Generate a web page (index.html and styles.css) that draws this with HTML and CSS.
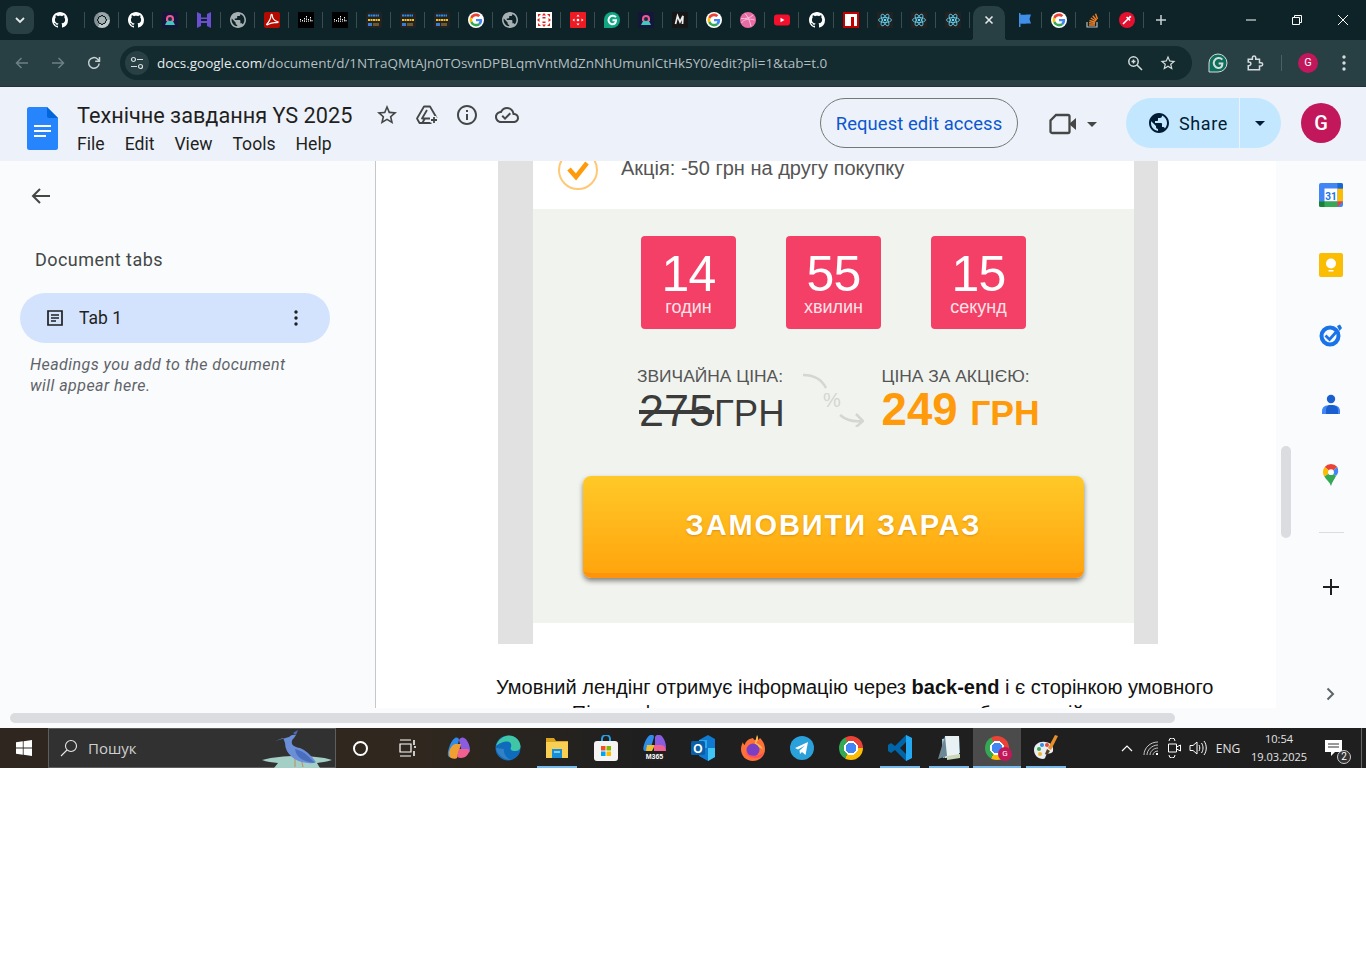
FILE: index.html
```html
<!DOCTYPE html>
<html lang="en">
<head>
    <meta charset="UTF-8">
    <meta name="viewport" content="width=device-width, initial-scale=1.0">
    <title>Технічне завдання YS 2025 - Google Docs</title>
    <link rel="stylesheet" href="styles.css">
</head>
<body>

<!-- shared icons -->
<svg class="sprite" aria-hidden="true">
    <symbol id="i-github" viewBox="0 0 16 16"><circle cx="8" cy="8" r="8" fill="#0d2328"/><path fill="#fff" d="M8 0C3.58 0 0 3.58 0 8c0 3.54 2.29 6.53 5.47 7.59.4.07.55-.17.55-.38 0-.19-.01-.82-.01-1.49-2.01.37-2.53-.49-2.69-.94-.09-.23-.48-.94-.82-1.13-.28-.15-.68-.52-.01-.53.63-.01 1.08.58 1.23.82.72 1.21 1.87.87 2.33.66.07-.52.28-.87.51-1.07-1.78-.2-3.64-.89-3.64-3.95 0-.87.31-1.59.82-2.15-.08-.2-.36-1.02.08-2.12 0 0 .67-.21 2.2.82.64-.18 1.32-.27 2-.27.68 0 1.36.09 2 .27 1.53-1.04 2.2-.82 2.2-.82.44 1.1.16 1.92.08 2.12.51.56.82 1.27.82 2.15 0 3.07-1.87 3.75-3.65 3.95.29.25.54.73.54 1.48 0 1.07-.01 1.93-.01 2.2 0 .21.15.46.55.38A8.013 8.013 0 0016 8c0-4.42-3.58-8-8-8z"/></symbol>
    <symbol id="i-google" viewBox="-6 -6 60 60"><circle cx="24" cy="24" r="30" fill="#fff"/><path fill="#EA4335" d="M24 9.5c3.54 0 6.71 1.22 9.21 3.6l6.85-6.85C35.9 2.38 30.47 0 24 0 14.62 0 6.51 5.38 2.56 13.22l7.98 6.19C12.43 13.72 17.74 9.5 24 9.5z"/><path fill="#4285F4" d="M46.98 24.55c0-1.57-.15-3.09-.38-4.55H24v9.02h12.94c-.58 2.96-2.26 5.48-4.78 7.18l7.73 6c4.51-4.18 7.09-10.36 7.09-17.65z"/><path fill="#FBBC05" d="M10.53 28.59c-.48-1.45-.76-2.99-.76-4.59s.27-3.14.76-4.59l-7.98-6.19C.92 16.46 0 20.12 0 24c0 3.88.92 7.54 2.56 10.78l7.97-6.19z"/><path fill="#34A853" d="M24 48c6.48 0 11.93-2.13 15.89-5.81l-7.73-6c-2.15 1.45-4.92 2.3-8.16 2.3-6.26 0-11.57-4.22-13.47-9.91l-7.98 6.19C6.51 42.62 14.62 48 24 48z"/></symbol>
    <symbol id="i-globe" viewBox="2 2 20 20"><path d="M12 2C6.48 2 2 6.48 2 12s4.48 10 10 10 10-4.48 10-10S17.52 2 12 2zM11 19.93c-3.95-.49-7-3.85-7-7.93 0-.62.08-1.21.21-1.79L9 15v1c0 1.1.9 2 2 2v1.93zm6.9-2.54c-.26-.81-1-1.39-1.9-1.39h-1v-3c0-.55-.45-1-1-1H8v-2h2c.55 0 1-.45 1-1V7h2c1.1 0 2-.9 2-2v-.41c2.93 1.19 5 4.06 5 7.41 0 2.08-.8 3.97-2.1 5.39z"/></symbol>
    <symbol id="i-face" viewBox="0 0 16 16"><rect width="16" height="16" fill="#14163a"/><path fill="#ef5a8f" d="M4 7a4 4 0 018 0v2H4z"/><circle cx="8" cy="7" r="2" fill="#1d2a4a"/><path fill="#3fc8c0" d="M3 13l2-4h6l2 4z"/></symbol>
    <symbol id="i-bars" viewBox="0 0 16 16"><rect width="16" height="16"/><path stroke="#fff" stroke-width="1" stroke-dasharray="1 .6" d="M2.5 7v3M4.5 8v2M6.500 6v4M8.500 4v6M10.500 7v3M12.500 5v5M14 8v2"/></symbol>
    <symbol id="i-code" viewBox="0 0 16 16"><rect width="16" height="16" rx="2" fill="#232323"/><path stroke="#2f8fe8" stroke-width="2" stroke-dasharray="2 .5" d="M2 3.500h11"/><path stroke="#f0c020" stroke-width="2" stroke-dasharray="2 .5" d="M2 8h12"/><rect x="2" y="11" width="4" height="3" fill="#3a7bd5"/><rect x="7" y="11" width="6" height="3" fill="#6b5a30"/></symbol>
    <symbol id="i-react" viewBox="0 0 16 16"><rect width="16" height="16" rx="1" fill="#222"/><g fill="none" stroke="#61dafb" stroke-width=".8"><ellipse cx="8" cy="8" rx="6.500" ry="2.500"/><ellipse cx="8" cy="8" rx="6.500" ry="2.500" transform="rotate(60 8 8)"/><ellipse cx="8" cy="8" rx="6.500" ry="2.500" transform="rotate(120 8 8)"/></g><circle cx="8" cy="8" r="1.300" fill="#61dafb"/></symbol>
    <symbol id="i-star" viewBox="0 0 24 24"><path d="M22 9.240l-7.190-.62L12 2 9.190 8.630 2 9.240l5.460 4.730L5.820 21 12 17.270 18.180 21l-1.630-7.030L22 9.240zM12 15.400l-3.760 2.270 1-4.280-3.320-2.880 4.380-.38L12 6.100l1.710 4.040 4.380.38-3.320 2.880 1 4.280L12 15.400z"/></symbol>
    <symbol id="i-gram" viewBox="0 0 16 16"><path fill="#11a683" d="M8 0a8 8 0 00-8 8v8h8A8 8 0 008 0z"/><path fill="none" stroke="#fff" stroke-width="2" d="M12 5.200A4.300 4.300 0 108 12.300c2.400 0 4-1.700 4-4H8.500"/></symbol>
</svg>

<header class="tabstrip">
    <button class="tab-search"><svg width="12" height="8" viewBox="0 0 12 8"><path d="M2 2l4 4 4-4" fill="none" stroke="#e3e8e9" stroke-width="1.800"/></svg></button>
    <div class="tab tab-first"><svg class="fav"><use href="#i-github"/></svg></div>
    <div class="tab"><span class="chrome-logo chrome-grey"></span></div>
    <div class="tab"><svg class="fav"><use href="#i-github"/></svg></div>
    <div class="tab"><svg class="fav"><use href="#i-face"/></svg></div>
    <div class="tab"><svg class="fav" viewBox="0 0 16 16"><path fill="#6a4fd0" d="M1 0l4 2v3.500h6V2l4-2v16l-4-2v-3H5v3l-4 2zM5 7v2h6V7z"/></svg></div>
    <div class="tab"><svg class="fav grey"><use href="#i-globe"/></svg></div>
    <div class="tab"><svg class="fav" viewBox="0 0 16 16"><rect width="16" height="16" rx="2" fill="#b30b00"/><path fill="none" stroke="#fff" stroke-width="1.200" d="M2.500 12.500C4.500 11 7 6 7 3.500c0-1.500 1.300-1.500 1.300 0 0 2.500 2 5.500 5 6 1.200.2 1 1.300-.3 1.200-3-.3-6.500.2-8.500 1.500-1 .7-2 1-2-.2"/></svg></div>
    <div class="tab"><svg class="fav"><use href="#i-bars"/></svg></div>
    <div class="tab"><svg class="fav"><use href="#i-bars"/></svg></div>
    <div class="tab"><svg class="fav"><use href="#i-code"/></svg></div>
    <div class="tab"><svg class="fav"><use href="#i-code"/></svg></div>
    <div class="tab"><svg class="fav"><use href="#i-code"/></svg></div>
    <div class="tab"><svg class="fav"><use href="#i-google"/></svg></div>
    <div class="tab"><svg class="fav grey"><use href="#i-globe"/></svg></div>
    <div class="tab"><svg class="fav" viewBox="0 0 16 16"><rect width="16" height="16" fill="#fff"/><path fill="#e0221c" d="M8 1l2 2.500H6zM8 15l-2-2.500h4zM1 8l2.500-2v4zM15 8l-2.500 2V6zM6.500 5h3v1.500h-3zM6.500 9.500h3V11h-3zM2 2h3L2 5zM14 2v3l-3-3zM2 14v-3l3 3zM14 14h-3l3-3z"/></svg></div>
    <div class="tab"><svg class="fav" viewBox="0 0 16 16"><rect width="16" height="16" rx="1" fill="#ed1c24"/><path fill="#fff" d="M8 2.500l1.500 2h-3zM8 13.500l-1.500-2h3zM2.500 8l2-1.500v3zM13.500 8l-2 1.500v-3z"/><circle cx="8" cy="8" r="1.300" fill="#fff"/></svg></div>
    <div class="tab"><svg class="fav"><use href="#i-gram"/></svg></div>
    <div class="tab"><svg class="fav"><use href="#i-face"/></svg></div>
    <div class="tab"><svg class="fav" viewBox="0 0 16 16"><rect width="16" height="16" rx="1" fill="#161616"/><path fill="none" stroke="#eee" stroke-width="1.700" d="M3.500 12l2-8 2.500 6 3-6-.5 8"/></svg></div>
    <div class="tab"><svg class="fav"><use href="#i-google"/></svg></div>
    <div class="tab"><svg class="fav" viewBox="0 0 16 16"><circle cx="8" cy="8" r="8" fill="#ea6ca4"/><path fill="none" stroke="#f9c3dc" stroke-width="1" d="M5 1.500c3 3 5 8 6 13M1 6.500c5 .5 9-.5 12-3.500M1.500 11c2-3.500 7-5 13-3"/></svg></div>
    <div class="tab"><svg class="fav" viewBox="0 0 16 16"><rect y="2.500" width="16" height="11" rx="3" fill="#f40f2c"/><path fill="#fff" d="M6.500 5.700v4.600L10.500 8z"/></svg></div>
    <div class="tab"><svg class="fav"><use href="#i-github"/></svg></div>
    <div class="tab"><svg class="fav" viewBox="0 0 16 16"><rect width="16" height="16" fill="#c10000"/><path fill="#fff" d="M2 2h12v12h-3V5H8v9H2z"/></svg></div>
    <div class="tab"><svg class="fav"><use href="#i-react"/></svg></div>
    <div class="tab"><svg class="fav"><use href="#i-react"/></svg></div>
    <div class="tab"><svg class="fav"><use href="#i-react"/></svg></div>
    <div class="tab tab-active"><span><svg width="10" height="10" viewBox="0 0 10 10"><path d="M1.500 1.500l7 7M8.500 1.500l-7 7" stroke="#e3e8e9" stroke-width="1.600"/></svg></span></div>
    <div class="tab"><svg class="fav" viewBox="0 0 16 16"><path fill="#3f8ee8" d="M2 1h1.500v1.500c3 1 5-.5 10.500 0l-1.500 4.500L14 11.500c-5.500-.5-7.500 1-10.500 0V15H2z"/></svg></div>
    <div class="tab"><svg class="fav"><use href="#i-google"/></svg></div>
    <div class="tab"><svg class="fav" viewBox="0 0 16 16"><path fill="none" stroke="#bcbbbb" stroke-width="1.200" d="M2 10v5h10v-5"/><path fill="none" stroke="#f48024" stroke-width="1.400" d="M4 13h6M4 10.800l6 .6M4.500 8.500l5.800 1.700M5.800 6l5 3M7.800 3.800l3.800 4.500M10.500 1.800l2 5.300"/></svg></div>
    <div class="tab"><svg class="fav" viewBox="0 0 16 16"><circle cx="8" cy="8" r="8" fill="#e3102f"/><path stroke="#fff" stroke-width="1.600" d="M4 12l5-5"/><path fill="#fff" d="M8 4.500l1.500 1 1.500-2 1.500 1.500-2 1.500 1 1.500-1 1L7 5.500z"/></svg></div>
    <div class="tab-new"><svg width="14" height="14" viewBox="0 0 14 14"><path d="M7 2v10M2 7h10" stroke="#c8d1d3" stroke-width="1.500"/></svg></div>
    <div class="win-controls">
        <span><svg width="10" height="10" viewBox="0 0 10 10"><path d="M0 5h10" stroke="#fff"/></svg></span>
        <span><svg width="10" height="10" viewBox="0 0 10 10"><path d="M.5 2.500h7v7h-7zM2.500 2.500V.5h7v7h-2" fill="none" stroke="#fff"/></svg></span>
        <span><svg width="10" height="10" viewBox="0 0 10 10"><path d="M0 0l10 10M10 0L0 10" stroke="#fff"/></svg></span>
    </div>
</header>

<nav class="toolbar">
    <button class="tool"><svg width="16" height="16" viewBox="0 0 16 16"><path d="M14 8H3M7.500 3L2.500 8l5 5" fill="none" stroke="#6d8084" stroke-width="1.500"/></svg></button>
    <button class="tool"><svg width="16" height="16" viewBox="0 0 16 16"><path d="M2 8h11M8.500 3l5 5-5 5" fill="none" stroke="#6d8084" stroke-width="1.500"/></svg></button>
    <button class="tool"><svg width="16" height="16" viewBox="0 0 16 16"><path d="M13.200 8.500A5.300 5.300 0 1111.500 4L13.500 6M13.500 2v4.300H9.200" fill="none" stroke="#c8d1d3" stroke-width="1.500"/></svg></button>
    <div class="omnibox">
        <span class="site-info"><svg width="14" height="14" viewBox="0 0 14 14"><g fill="none" stroke="#d5dcdd" stroke-width="1.200"><circle cx="3.500" cy="3.500" r="2"/><path d="M7 3.500h6M1 10.500h6"/><circle cx="10.500" cy="10.500" r="2"/></g></svg></span>
        <span class="url"><span class="url-host">docs.google.com</span>/document/d/1NTraQMtAJn0TOsvnDPBLqmVntMdZnNhUmunlCtHk5Y0/edit?pli=1&amp;tab=t.0</span>
        <svg class="omni-icon" width="16" height="16" viewBox="0 0 16 16"><g fill="none" stroke="#d5dcdd" stroke-width="1.500"><circle cx="6.500" cy="6.500" r="4.700"/><path d="M10 10l5 5M4.500 6.500h4M6.500 4.500v4"/></g></svg>
        <svg class="omni-icon star-icon" width="18" height="18"><use href="#i-star"/></svg>
    </div>
    <button class="tool tool-first"><svg width="20" height="20" viewBox="0 0 16 16"><path fill="#0c6f5b" stroke="#d5dcdd" stroke-width=".8" d="M8 .8A7.200 7.200 0 00.800 8v7.200H8A7.200 7.200 0 008 .8z"/><path fill="none" stroke="#d5dcdd" stroke-width="1.600" d="M11.500 5.300A4 4 0 108 12c2.200 0 3.500-1.500 3.500-3.700H8.500"/></svg></button>
    <button class="tool"><svg width="18" height="18" viewBox="0 0 24 24"><path fill="none" stroke="#d5dcdd" stroke-width="2" d="M3 7h5.500V4.500a2.300 2.300 0 014.500 0V7h5v4.500h2a2.200 2.200 0 010 4.500h-2v5H3v-5.500h1a2.500 2.500 0 000-5H3z"/></svg></button>
    <span class="tool-sep"></span>
    <button class="tool"><span class="mini-avatar">G</span></button>
    <button class="tool"><svg width="4" height="16" viewBox="0 0 4 16"><g fill="#d5dcdd"><circle cx="2" cy="2" r="1.700"/><circle cx="2" cy="8" r="1.700"/><circle cx="2" cy="14" r="1.700"/></g></svg></button>
</nav>

<section class="doc-header">
    <svg class="docs-logo" width="31" height="43" viewBox="0 0 31 43">
        <path fill="#2684fc" d="M2.500 0H20l11 11v29.500a2.500 2.500 0 01-2.500 2.500h-26A2.500 2.500 0 010 40.500v-38A2.500 2.500 0 012.500 0z"/>
        <path fill="#0066da" d="M20 0l11 11H22a2 2 0 01-2-2z"/>
        <path fill="#fff" d="M7 18h17v2H7zM7 23h17v2H7zM7 28h12v2H7z"/>
    </svg>
    <div class="doc-title-block">
        <div class="doc-title-row">
            <h1 class="doc-title">Технічне завдання YS 2025</h1>
            <div class="doc-actions">
                <svg width="24" height="24" viewBox="0 0 24 24"><use href="#i-star"/></svg>
                <svg width="24" height="24" viewBox="0 0 24 24"><path d="M9 3.500h6l7 12-2.500 4.500H4.500L2 15.500zM12 7l-5 8.500h8M7.500 19.500L10 15.500" fill="none" stroke="#444746" stroke-width="1.800" stroke-linejoin="round"/><path d="M19 13v8M15 17h8" stroke="#edf2fa" stroke-width="5"/><path d="M19 14v6M16 17h6" stroke="#444746" stroke-width="1.800"/></svg>
                <svg width="24" height="24" viewBox="0 0 24 24"><path d="M11 7h2v2h-2zm0 4h2v6h-2zm1-9C6.480 2 2 6.480 2 12s4.480 10 10 10 10-4.480 10-10S17.520 2 12 2zm0 18c-4.410 0-8-3.590-8-8s3.590-8 8-8 8 3.590 8 8-3.590 8-8 8z"/></svg>
                <svg width="24" height="24" viewBox="0 0 24 24"><path d="M19.350 10.040C18.670 6.590 15.640 4 12 4 9.110 4 6.600 5.640 5.350 8.040 2.340 8.360 0 10.910 0 14c0 3.310 2.690 6 6 6h13c2.760 0 5-2.240 5-5 0-2.640-2.050-4.780-4.650-4.960zM19 18H6c-2.210 0-4-1.790-4-4 0-2.050 1.530-3.760 3.560-3.970l1.070-.11.500-.95C8.080 7.140 9.940 6 12 6c2.620 0 4.880 1.860 5.390 4.430l.3 1.500 1.530.11c1.560.1 2.780 1.410 2.780 2.960 0 1.650-1.350 3-3 3zm-9-3.820l-2.090-2.090L6.500 13.500 10 17l6.010-6.010-1.410-1.410z"/></svg>
            </div>
        </div>
        <div class="doc-menu">
            <span>File</span><span>Edit</span><span>View</span><span>Tools</span><span>Help</span>
        </div>
    </div>
    <button class="request-btn">Request edit access</button>
    <div class="meet-btn">
        <svg width="28" height="22" viewBox="0 0 28 22"><path d="M7 2h12a1.500 1.500 0 011.500 1.500v15A1.500 1.500 0 0119 20H3a1.500 1.500 0 01-1.500-1.500V7.500z" fill="none" stroke="#444746" stroke-width="2.300"/><path d="M20 11l7-6v12z" fill="#444746"/></svg>
        <span class="caret"></span>
    </div>
    <div class="share-btn">
        <span class="share-main"><svg width="20" height="20"><use href="#i-globe"/></svg>Share</span>
        <span class="share-drop"><span class="caret caret-dark"></span></span>
    </div>
    <span class="avatar">G</span>
</section>

<main class="workspace">
    <aside class="sidebar">
        <svg class="back-arrow" width="24" height="24" viewBox="0 0 24 24"><path d="M21 12H4M11 5l-7 7 7 7" fill="none" stroke="#444746" stroke-width="2"/></svg>
        <h2 class="sidebar-title">Document tabs</h2>
        <div class="tab-pill">
            <svg width="20" height="20" viewBox="0 0 20 20"><path d="M3 3h14v14H3zM6 7h8M6 10h8M6 13h5" fill="none" stroke="#1f1f1f" stroke-width="1.700"/></svg>
            <span class="tab-pill-name">Tab 1</span>
            <svg width="4" height="16" viewBox="0 0 4 16"><g fill="#1f1f1f"><circle cx="2" cy="2" r="1.700"/><circle cx="2" cy="8" r="1.700"/><circle cx="2" cy="14" r="1.700"/></g></svg>
        </div>
        <p class="sidebar-note">Headings you add to the document will appear here.</p>
    </aside>

    <div class="canvas">
        <div class="promo">
            <div class="promo-inner">
                <div class="promo-check">
                    <svg width="40" height="40" viewBox="0 0 40 40"><circle cx="20" cy="20" r="19" fill="#fff" stroke="#ffc875" stroke-width="2"/><path d="M11 19l7 8 11-14" fill="none" stroke="#ff9a0a" stroke-width="4.500"/></svg>
                    <span>Акція: -50 грн на другу покупку</span>
                </div>
                <div class="promo-offer">
                    <div class="countdown">
                        <div class="count-box"><span class="count-num">14</span><span class="count-label">годин</span></div>
                        <div class="count-box"><span class="count-num">55</span><span class="count-label">хвилин</span></div>
                        <div class="count-box"><span class="count-num">15</span><span class="count-label">секунд</span></div>
                    </div>
                    <div class="prices">
                        <div class="price-col">
                            <div class="price-label">ЗВИЧАЙНА ЦІНА:</div>
                            <div class="price-old"><s>275</s>ГРН</div>
                        </div>
                        <svg class="price-arrow" width="62" height="56" viewBox="0 0 62 56">
                            <path d="M1 4c10 0 18 3 23 13M38 44c6 5 14 7 22 6M54 43l7 7-7 6" fill="none" stroke="#d3d6d3" stroke-width="2.500"/>
                            <text x="21" y="36" class="price-arrow-text">%</text>
                        </svg>
                        <div class="price-col">
                            <div class="price-label">ЦІНА ЗА АКЦІЄЮ:</div>
                            <div class="price-new">249 <small>ГРН</small></div>
                        </div>
                    </div>
                    <button class="order-btn">ЗАМОВИТИ ЗАРАЗ</button>
                </div>
            </div>
        </div>
        <p class="doc-text">Умовний лендінг отримує інформацію через <b>back-end</b> і є сторінкою умовного оплати. Після оформлення замовлення користувач бачить свій</p>
    </div>

    <div class="doc-scroll"><span class="doc-scroll-thumb"></span></div>

    <aside class="addons">
        <svg class="addon addon-cal" width="24" height="24" viewBox="0 0 24 24">
            <rect width="24" height="24" rx="2" fill="#4285f4"/><rect x="5.500" y="5.500" width="13" height="13" fill="#fff"/><path fill="#fbbc04" d="M18.500 5.500H24v13h-5.500z"/><path fill="#34a853" d="M0 18.500h18.500V24H2a2 2 0 01-2-2z"/><path fill="#ea4335" d="M18.500 18.500H24L18.500 24z"/><path fill="#1967d2" d="M18.500 0H22a2 2 0 012 2v3.500h-5.500z"/><path fill="#188038" d="M0 18.500h5.500V24H2a2 2 0 01-2-2z"/>
            <text x="12" y="16.500" class="cal-text">31</text>
        </svg>
        <svg class="addon addon-keep" width="24" height="24" viewBox="0 0 24 24"><rect width="24" height="24" rx="2" fill="#fbbc04"/><circle cx="12" cy="10.500" r="5" fill="#fff"/><path fill="#fff" d="M9.500 17h5v1.500h-5z"/></svg>
        <svg class="addon addon-tasks" width="24" height="24" viewBox="0 0 24 24"><circle cx="11" cy="13" r="8.500" fill="none" stroke="#1a73e8" stroke-width="4"/><path d="M6.500 12.500l4 4 8-9" fill="none" stroke="#1a73e8" stroke-width="2.800"/><path fill="#1a73e8" d="M18 3l3-1.500L23 5l-2.500 3z"/></svg>
        <svg class="addon addon-contacts" width="24" height="24" viewBox="0 0 24 24"><circle cx="12" cy="6" r="4.200" fill="#1a5fd0"/><path fill="#4285f4" d="M3 21v-3c0-4 3-6 9-6s9 2 9 6v3z"/><path fill="#1a5fd0" d="M7 21v-4c0-3 2-5 5-5s7 1 7 5v4z"/></svg>
        <svg class="addon addon-maps" width="24" height="24" viewBox="0 0 24 24"><path fill="#ea4335" d="M12 1a8.300 8.300 0 00-6.300 2.900l6.300 5.300 6.300-5.300A8.300 8.300 0 0012 1z"/><path fill="#4285f4" d="M18.300 3.900L12 9.200l5 3.800a8.300 8.300 0 001.300-9.100z" /><path fill="#fbbc04" d="M5.700 3.900A8.300 8.300 0 004 9.300c0 1.500.5 3 1.300 4.200L12 9.200z"/><path fill="#34a853" d="M5.300 13.500c1.800 3 5.500 5.500 6.700 9.500 1-4 3.500-6.500 5-10l-5-3.800z"/><circle cx="12" cy="9.200" r="2.900" fill="#fff"/></svg>
        <span class="addon-sep"></span>
        <svg class="addon addon-plus" width="20" height="20" viewBox="0 0 20 20"><path d="M10 2v16M2 10h16" stroke="#1f1f1f" stroke-width="2"/></svg>
        <svg class="addon addon-more" width="12" height="16" viewBox="0 0 12 16"><path d="M2.500 2.500L8 8l-5.500 5.500" fill="none" stroke="#5f6368" stroke-width="2"/></svg>
    </aside>
</main>

<div class="hscroll"><span class="hscroll-thumb"></span></div>

<footer class="taskbar">
    <div class="start"><svg width="16" height="16" viewBox="0 0 16 16"><path fill="#fff" d="M0 2.300l6.800-1v6.300H0zM7.600 1.200L16 0v7.600H7.600zM0 8.400h6.800v6.300L0 13.700zM7.600 8.400H16V16l-8.400-1.200z"/></svg></div>
    <div class="task-search">
        <svg width="18" height="18" viewBox="0 0 18 18"><g fill="none" stroke="#e8e8e8" stroke-width="1.100"><circle cx="11" cy="7" r="5.500"/><path d="M7 11l-6 6"/></g></svg>
        <span>Пошук</span>
        <svg class="heron" width="70" height="40" viewBox="0 0 70 40">
            <path fill="#a3cfc6" d="M0 32c12-3 22-4 35-4s26 1 35 4c-6 2-11 2-15 3l3 5H12l4-5c-6-1-11-1-16-3z"/>
            <path d="M33 30v9M39 30l2 9" stroke="#c78a5a" stroke-width="1"/>
            <path fill="#6a8fd8" d="M13 13L27 9q3-3 7-2l-2 3q-3 2-2 6 2 3 8 4 8 3 16 14-3 2-8 1-11-1-16-6-7-6-7-14-1-3-2-5z"/>
            <path fill="#4a6dbd" d="M33 21q8 2 13 7l7 7q-10-1-15-5-4-3-5-9z"/>
            <path fill="#4a6dbd" d="M31 5l5-3-2 5z"/>
        </svg>
    </div>
    <div class="task-app"><span class="cortana"></span></div>
    <div class="task-app"><svg class="task-view" width="18" height="18" viewBox="0 0 18 18"><path d="M1 1h11M1 17h11M1 5h11v8H1z" fill="none" stroke="#fff" stroke-width="1.200"/><path d="M15 1v5M15 8h2M15 12v5" stroke="#fff" stroke-width="1.500"/></svg></div>
    <div class="task-app"><svg width="24" height="24" viewBox="0 0 24 24"><path fill="#2f8ce8" d="M8 2c2-1 4 0 4 2l-4 15c-1 2-4 3-6 2-2-2-1-6 0-9 1-4 3-8 6-10z"/><path fill="#8a5ce0" d="M12 4c1-2 3-3 5-2 3 1 6 7 6 12 0 2-1 3-3 3h-5z"/><path fill="#f0a030" d="M2 16c1-4 3-7 6-8h6l-4 14c-1 1-4 1-6 0-2-1-2-3-2-6z"/><path fill="#f06090" d="M12 13h8c2 0 3 2 2 3-1 3-4 6-8 6-2 0-4-1-4-2z"/></svg></div>
    <div class="task-app"><svg width="26" height="26" viewBox="0 0 26 26"><circle cx="13" cy="13" r="12.500" fill="#0f6cbd"/><path fill="#3ec6a6" d="M1 11C3 4 9 .5 14 .5 20 .5 25 5 25.500 11c.3 3.500-3 5.500-6.500 5-3-.4-4-2-3-4 1-3-1-6-5-5.500C6 7 2 10 1 11z"/><path fill="#fff" fill-opacity=".15" d="M1 13c1 7 8 12 15 12-5-2-8-7-7-11z"/></svg></div>
    <div class="task-app is-open"><svg width="24" height="22" viewBox="0 0 24 22"><path fill="#d9a520" d="M1 1h8l2 3h12v3H1z"/><path fill="#f8cf52" d="M1 5h22v16H1z"/><path fill="#1590d8" d="M7 12h10v9H7z"/><path fill="#7fcdf0" d="M9 14h6v2H9z"/></svg></div>
    <div class="task-app"><svg width="24" height="26" viewBox="0 0 24 26"><path d="M8 7V4a4 4 0 018 0v3" fill="none" stroke="#24a2e6" stroke-width="2"/><rect y="6" width="24" height="20" rx="3" fill="#f4f4f4"/><path fill="#f25022" d="M7 11h4.500v4.500H7z"/><path fill="#7fba00" d="M12.500 11H17v4.500h-4.500z"/><path fill="#00a4ef" d="M7 16.500h4.500V21H7z"/><path fill="#ffb900" d="M12.500 16.500H17V21h-4.500z"/></svg></div>
    <div class="task-app task-m365"><svg width="24" height="18" viewBox="0 0 24 18"><path fill="#2f8ce8" d="M7 0c2-1 4 0 4 2L7 16H2C0 16 0 13 1 10c1-4 3-8 6-10z"/><path fill="#8a5ce0" d="M12 2c1-2 3-3 5-2 3 1 6 7 6 12 0 2-1 4-3 4h-8z"/><path fill="#f0c030" d="M4 10h8L9 16H3z"/><path fill="#f06090" d="M11 10h7c3 0 5 3 5 6H11z"/></svg><span>M365</span></div>
    <div class="task-app"><svg width="26" height="26" viewBox="0 0 26 26"><path fill="#0f7ad0" d="M8 5l9-5 7 4v18l-7 4-9-5z"/><path fill="#40c4f5" d="M17 13h7v9l-7 4z"/><path fill="#28a8ea" d="M8 5h8v8H8z"/><rect y="6" width="14" height="14" rx="1.500" fill="#0a5fa8"/><text x="7" y="17.500" class="outlook-text">O</text></svg></div>
    <div class="task-app"><svg width="24" height="26" viewBox="0 0 24 26"><path fill="#ff7139" d="M12 3c1 3 5 3 7 0 2 2 5 6 5 11 0 7-5 12-12 12S0 21 0 14c0-3 1-5 2-7 0 2 1 2 2 3 0-3 3-6 8-7z"/><path fill="#ffbd4f" d="M16 0c2 3 1 6-1 8 3 1 6 3 7 7-3-3-6-4-9-4 1-3 2-8 3-11z"/><circle cx="12" cy="15" r="6.500" fill="#7a3fc4"/><path fill="#ff4f5e" d="M4 17c2 4 6 6 11 6s7-3 8-6c-3 4-13 6-19 0z"/></svg></div>
    <div class="task-app"><svg width="24" height="24" viewBox="0 0 24 24"><circle cx="12" cy="12" r="12" fill="#2aa1da"/><path fill="#fff" d="M5 12l13-6-2.500 13-3.500-3-2 2-.5-3.500 5.500-5-7 4z"/></svg></div>
    <div class="task-app"><span class="chrome-logo chrome-big"></span></div>
    <div class="task-app is-open"><svg width="24" height="26" viewBox="0 0 24 26"><path fill="#0065a9" d="M18 0l6 3v20l-6 3L7 15l-4 3-3-2V10l3-2 4 3zM18 7l-6 6 6 6z"/><path fill="#23a9f2" d="M18 0l6 3v20l-6 3z"/></svg></div>
    <div class="task-app is-open"><svg width="24" height="26" viewBox="0 0 24 26"><path fill="#a9d3e8" d="M5 4l17-3 1 17-17 5z"/><path fill="#e8f2f5" d="M8 1h14v20l-14 2z"/><path fill="#6b8894" d="M1 24l7-23 2 20z"/><path fill="#c9d6b8" d="M10 21l13-2v4l-13 2z"/></svg></div>
    <div class="task-app is-current"><span class="chrome-logo chrome-big"></span><span class="task-badge">G</span></div>
    <div class="task-app is-open"><svg width="26" height="26" viewBox="0 0 26 26"><path fill="#e9eef2" d="M1 15c0-6 6-9 11-8 5 0 9 4 8 9-1 3-4 2-6 3-2 2-1 5-4 5-5 0-9-4-9-9z"/><circle cx="6" cy="14" r="2" fill="#3fa64a"/><circle cx="9" cy="10" r="2" fill="#2f8ce8"/><circle cx="14" cy="10" r="2" fill="#e34a3c"/><circle cx="7" cy="19" r="2" fill="#f0b52f"/><path fill="#e88f2a" d="M22 0l3 1-7 14-3-2z"/><path fill="#5a3d20" d="M14 14l3 2-3 4-2-1z"/></svg></div>
    <div class="tray">
        <span class="tray-item tray-chevron"><svg width="12" height="8" viewBox="0 0 12 8"><path d="M1 7l5-5 5 5" fill="none" stroke="#fff" stroke-width="1.200"/></svg></span>
        <span class="tray-item tray-wifi"><svg width="16" height="16" viewBox="0 0 16 16"><g fill="none" stroke="#c8c8c8"><path d="M1 15C1 8 7 2 15 2M4 15c0-5 5-10 11-10M7 15c0-3 3-7 8-7M10 15c0-2 2-4 5-4"/></g><path d="M13 13h2v2h-2z" fill="#fff"/></svg></span>
        <span class="tray-item tray-cam"><svg width="16" height="20" viewBox="0 0 16 20"><path d="M2 3a3 3 0 016 0M2 17a3 3 0 006 0" fill="none" stroke="#fff"/><path d="M1.500 6h8v8h-8zM9.500 9l4-2v6l-4-2z" fill="none" stroke="#fff"/></svg></span>
        <span class="tray-item tray-vol"><svg width="18" height="16" viewBox="0 0 18 16"><path d="M1 5.500h3L8 2v12l-4-3.500H1zM10 5c1 2 1 4 0 6M12.500 3c2 3 2 7 0 10M15 1c3 4 3 10 0 14" fill="none" stroke="#fff"/></svg></span>
        <span class="tray-lang">ENG</span>
        <span class="tray-clock"><span>10:54</span><span>19.03.2025</span></span>
        <span class="tray-notify"><svg width="20" height="18" viewBox="0 0 20 18"><path fill="#fff" d="M1 1h17v12h-7l-4 4v-4H1z"/><path stroke="#333" d="M4 5h11M4 8h11"/></svg><span class="notify-count">2</span></span>
    </div>
</footer>

</body>
</html>
```

FILE: styles.css
```css
* {
    box-sizing: border-box;
}

html, body {
    margin: 0;
    padding: 0;
    background-color: #fff;
}

body {
    width: 1366px;
    font-family: Roboto, "Liberation Sans", sans-serif;
}

button {
    border: 0;
    background: none;
    padding: 0;
    font-family: inherit;
}

svg {
    display: block;
    flex-shrink: 0;
}

.sprite {
    width: 0;
    height: 0;
    position: absolute;
}

/* browser tabs */
.tabstrip {
    height: 40px;
    display: flex;
    align-items: center;
    background-color: #0d2328;
}

.tab-search {
    width: 28px;
    height: 28px;
    margin-left: 6px;
    border-radius: 8px;
    background-color: #283f43;
    display: flex;
    align-items: center;
    justify-content: center;
}

.tab {
    width: 34.060px;
    height: 40px;
    display: flex;
    align-items: center;
    justify-content: center;
    background: linear-gradient(#3a4e52, #3a4e52) right center / 1px 16px no-repeat;
}

.tab-first {
    width: 50.500px;
    padding-left: 2px;
}

.fav {
    width: 16px;
    height: 16px;
}

.grey {
    fill: #a7b1b4;
}

.tab-active {
    width: 38px;
    align-items: flex-end;
    background: radial-gradient(circle at 0 0, transparent 3px, #283f43 3.500px) left bottom / 3px 3px no-repeat,
        radial-gradient(circle at 100% 0, transparent 3px, #283f43 3.500px) right bottom / 3px 3px no-repeat;
}

.tab-active span {
    width: 32px;
    height: 34px;
    padding-bottom: 6px;
    border-radius: 10px 10px 0 0;
    background-color: #283f43;
    display: flex;
    align-items: center;
    justify-content: center;
}

.tab-new {
    width: 34px;
    margin-left: 0;
    display: flex;
    justify-content: center;
}

.win-controls {
    margin-left: auto;
    display: flex;
}

.win-controls span {
    width: 46px;
    height: 40px;
    display: flex;
    align-items: center;
    justify-content: center;
}

.chrome-logo {
    display: block;
    width: 16px;
    height: 16px;
    border-radius: 50%;
    background: radial-gradient(circle, #4285f4 0 31%, #fff 32% 41%, transparent 42%),
        conic-gradient(from 330deg, #ea4335 0 120deg, #fbbc05 120deg 240deg, #34a853 240deg 360deg);
}

.chrome-grey {
    background: radial-gradient(circle, #a7b1b4 0 31%, #0d2328 32% 41%, transparent 42%),
        conic-gradient(from 330deg, #9aa5a8 0 120deg, #c0c8ca 120deg 240deg, #838f92 240deg 360deg);
}

.chrome-big {
    width: 24px;
    height: 24px;
}

/* address bar */
.toolbar {
    height: 47px;
    display: flex;
    align-items: center;
    padding: 0 4px;
    background-color: #283f43;
    border-bottom: 1px solid #1f3336;
}

.tool {
    width: 36px;
    height: 36px;
    display: flex;
    align-items: center;
    justify-content: center;
}

.tool-first {
    margin-left: 8px;
    margin-right: 1px;
}

.omnibox {
    width: 1072px;
    height: 34px;
    margin-left: 8px;
    padding: 0 15px 0 5px;
    display: flex;
    align-items: center;
    border-radius: 17px;
    background-color: #132a2f;
}

.site-info {
    width: 24px;
    height: 24px;
    border-radius: 50%;
    background-color: #283f43;
    display: flex;
    align-items: center;
    justify-content: center;
}

.url {
    margin-left: 8px;
    flex: 1;
    font-family: "Open Sans", sans-serif;
    font-size: 13.480px;
    color: #b3bfc1;
    white-space: nowrap;
}

.url-host {
    color: #e6ebec;
}

.omni-icon {
    margin-left: 16px;
}

.star-icon {
    fill: #d5dcdd;
}

.tool-sep {
    width: 1px;
    height: 16px;
    margin: 0 8px;
    background-color: #4b6064;
}

.mini-avatar {
    width: 20px;
    height: 20px;
    border-radius: 50%;
    background-color: #c2185b;
    color: #fff;
    font-size: 11px;
    line-height: 20px;
    text-align: center;
}

/* docs header */
.doc-header {
    height: 74px;
    display: flex;
    align-items: center;
    background-color: #edf2fa;
    padding-left: 27px;
}

.docs-logo {
    margin-top: 8px;
}

.doc-title-block {
    margin: 8px 0 0 19px;
    width: 743px;
}

.doc-title-row {
    display: flex;
    align-items: center;
    height: 30px;
}

.doc-title {
    margin: 0;
    font-size: 21.700px;
    font-weight: 400;
    color: #1f1f1f;
    white-space: nowrap;
}

.doc-actions {
    margin-left: 23px;
    display: flex;
    gap: 16px;
    fill: #444746;
}

.doc-menu {
    display: flex;
    gap: 20px;
    margin-top: 2px;
    font-size: 17.600px;
    line-height: 24px;
    color: #1f1f1f;
}

.request-btn {
    width: 198px;
    height: 50px;
    margin-top: -2px;
    border: 1px solid #747775;
    border-radius: 25px;
    font-size: 18.400px;
    font-weight: 400;
    letter-spacing: 0.1px;
    color: #0b57d0;
}

.meet-btn {
    width: 108px;
    display: flex;
    align-items: center;
    padding-left: 31px;
}

.caret {
    width: 0;
    height: 0;
    margin-left: 10px;
    border-top: 5px solid #444746;
    border-left: 5px solid transparent;
    border-right: 5px solid transparent;
}

.caret-dark {
    margin: 0;
    border-top-color: #001d35;
}

.share-btn {
    width: 155px;
    height: 50px;
    margin-top: -2px;
    display: flex;
    font-size: 18px;
    letter-spacing: 0.6px;
    color: #001d35;
}

.share-main {
    width: 114px;
    padding-left: 23px;
    display: flex;
    align-items: center;
    gap: 10px;
    fill: #001d35;
    border-radius: 25px 0 0 25px;
    border-right: 1px solid #edf2fa;
    background-color: #c2e7ff;
}

.share-drop {
    width: 41px;
    padding-right: 1px;
    display: flex;
    align-items: center;
    justify-content: center;
    border-radius: 0 25px 25px 0;
    background-color: #c2e7ff;
}

.avatar {
    width: 40px;
    height: 40px;
    margin: -2px 0 0 20px;
    border-radius: 50%;
    background-color: #c2185b;
    color: #fff;
    font-size: 20px;
    font-weight: 500;
    line-height: 40px;
    text-align: center;
}

/* main area */
.workspace {
    height: 547px;
    display: flex;
    overflow: hidden;
    background-color: #f9fbfd;
}

.sidebar {
    width: 376px;
    padding: 23px 0 0 20px;
    border-right: 1px solid #c7c7c7;
}

.back-arrow {
    margin-left: 9px;
}

.sidebar-title {
    margin: 40px 0 21px 15px;
    font-size: 18px;
    font-weight: 400;
    letter-spacing: 0.45px;
    line-height: 24px;
    color: #444746;
}

.tab-pill {
    width: 310px;
    height: 50px;
    padding: 0 32px 0 25px;
    display: flex;
    align-items: center;
    border-radius: 25px;
    background-color: #d3e3fd;
}

.tab-pill-name {
    flex: 1;
    margin-left: 14px;
    font-size: 17.500px;
    color: #1f1f1f;
}

.sidebar-note {
    width: 270px;
    margin: 11px 0 0 10px;
    font-size: 16px;
    font-style: italic;
    line-height: 21px;
    letter-spacing: 0.45px;
    color: #5f6368;
}

.canvas {
    width: 900px;
    padding-left: 122px;
    background-color: #fff;
}

.promo {
    width: 660px;
    height: 483px;
    padding: 0 24px 0 35px;
    background-color: #e1e1e1;
}

.promo-inner {
    height: 100%;
    background-color: #fff;
    font-family: "Liberation Sans", Arial, sans-serif;
}

.promo-check {
    height: 48px;
    padding-left: 25px;
    display: flex;
    align-items: flex-start;
    gap: 23px;
    font-size: 20px;
    line-height: 14px;
    color: #555;
}

.promo-check svg {
    margin-top: -11px;
}

.promo-offer {
    height: 414px;
    padding-top: 27px;
    background-color: #f1f3ee;
}

.countdown {
    display: flex;
    justify-content: center;
    gap: 50px;
}

.count-box {
    width: 95px;
    height: 93px;
    padding-top: 11px;
    display: flex;
    flex-direction: column;
    align-items: center;
    border-radius: 4px;
    background-color: #f43f66;
    color: #fff;
}

.count-num {
    font-size: 50px;
    letter-spacing: -0.8px;
    line-height: 54px;
}

.count-label {
    font-size: 18px;
    line-height: 18px;
    margin-top: -3px;
    color: #fde3e8;
}

.prices {
    display: flex;
    margin-top: 37px;
    padding-left: 104px;
}

.price-label {
    font-size: 17.400px;
    line-height: 20px;
    color: #555;
    white-space: nowrap;
}

.price-old {
    font-size: 36.500px;
    line-height: 46px;
    margin: 2px 0 0 2px;
    color: #3b3b3b;
    white-space: nowrap;
}

.price-old s {
    font-size: 45px;
}

.price-arrow {
    margin: 5px 18px 0 17px;
}

.price-arrow-text {
    font-family: "Liberation Sans", sans-serif;
    font-size: 20px;
    fill: #d3d6d3;
}

.price-new {
    font-size: 45.500px;
    font-weight: 700;
    line-height: 46px;
    margin-top: 1px;
    color: #ff9a0a;
    white-space: nowrap;
}

.price-new small {
    font-size: 35.500px;
}

.order-btn {
    display: block;
    width: 501px;
    height: 102px;
    margin: 39px 0 0 50px;
    padding-top: 2px;
    border-radius: 8px;
    border-bottom: 5px solid #ff930a;
    background: linear-gradient(#ffc928, #ffa50d);
    box-shadow: 0 3px 5px rgba(60, 60, 60, 0.6);
    font-family: "Liberation Sans", Arial, sans-serif;
    font-size: 29px;
    font-weight: 700;
    letter-spacing: 1.900px;
    color: #fff;
    text-shadow: 0 1px 2px rgba(190, 110, 0, 0.5);
}

.doc-text {
    width: 722px;
    margin: 30px 0 0 -2px;
    font-family: "Liberation Sans", Arial, sans-serif;
    font-size: 20px;
    line-height: 26px;
    color: #111;
}

.doc-scroll {
    width: 16px;
    padding: 285px 0 0 5px;
    margin-right: 0;
}

.doc-scroll-thumb {
    display: block;
    width: 10px;
    height: 92px;
    border-radius: 5px;
    background-color: #dadce0;
}

.addons {
    width: 74px;
    display: flex;
    flex-direction: column;
    align-items: center;
    padding: 22px 0 0 4px;
}

.addon-keep, .addon-tasks, .addon-contacts, .addon-maps {
    margin-top: 46px;
}

.addon-sep {
    width: 25px;
    height: 1px;
    margin-top: 45px;
    background-color: #dadce0;
}

.addon-plus {
    margin-top: 44px;
}

.addon-more {
    margin-top: 89px;
}

.cal-text {
    font-family: Roboto, sans-serif;
    font-size: 10px;
    font-weight: 700;
    text-anchor: middle;
    fill: #1a73e8;
}

.hscroll {
    height: 20px;
    padding: 5px 10px;
    background-color: #f9fbfd;
}

.hscroll-thumb {
    display: block;
    width: 1165px;
    height: 10px;
    border-radius: 5px;
    background-color: #dadce0;
}

/* windows taskbar */
.taskbar {
    height: 40px;
    display: flex;
    align-items: center;
    background: linear-gradient(90deg, #2e261f, #30281f 420px, #1f1f1f 640px, #1f1f1f);
    color: #fff;
}

.start {
    width: 48px;
    display: flex;
    justify-content: center;
}

.task-search {
    width: 288px;
    height: 40px;
    padding-left: 11px;
    display: flex;
    align-items: center;
    border: 1px solid #5e5e5e;
    background-color: #313131;
    font-family: "Open Sans", sans-serif;
    font-size: 15px;
    color: #cfcfcf;
}

.task-search span {
    flex: 1;
    margin-left: 10px;
}

.heron {
    margin-right: 3px;
}

.task-app {
    width: 49px;
    height: 40px;
    display: flex;
    align-items: center;
    justify-content: center;
    position: relative;
}

.task-app.is-open {
    background: linear-gradient(#76b9ed, #76b9ed) center bottom / 40px 2px no-repeat;
}

.task-app.is-current {
    width: 48px;
    background: linear-gradient(#76b9ed, #76b9ed) center bottom / 100% 2px no-repeat, #4b4b4b;
}

.task-view {
    margin-right: 4px;
}

.task-m365 {
    flex-direction: column;
}

.task-m365 span {
    font-family: "Liberation Sans", sans-serif;
    font-size: 7px;
    font-weight: 700;
    color: #fff;
    background-color: #222;
    line-height: 8px;
}

.cortana {
    width: 15px;
    height: 15px;
    border: 2px solid #fff;
    border-radius: 50%;
}

.outlook-text {
    font-family: "Liberation Sans", sans-serif;
    font-size: 12px;
    font-weight: 700;
    text-anchor: middle;
    fill: #fff;
}

.task-badge {
    position: absolute;
    right: 9px;
    bottom: 7px;
    width: 14px;
    height: 14px;
    border-radius: 50%;
    background-color: #c2185b;
    font-size: 8px;
    line-height: 14px;
    text-align: center;
}

.tray {
    margin-left: auto;
    display: flex;
    align-items: center;
    height: 40px;
    padding-right: 4px;
    border-right: 1px solid #666;
    margin-right: 4px;
}

.tray-item {
    height: 40px;
    display: flex;
    align-items: center;
    justify-content: center;
}

.tray-chevron, .tray-wifi {
    width: 24px;
}

.tray-cam, .tray-vol {
    width: 23px;
}

.tray-lang {
    width: 38px;
    font-family: "Open Sans", sans-serif;
    font-size: 12px;
    text-align: center;
    color: #e4e4e4;
}

.tray-clock {
    width: 64px;
    margin-top: -2px;
    display: flex;
    flex-direction: column;
    align-items: center;
    gap: 3px;
    font-family: "Open Sans", sans-serif;
    font-size: 11px;
    line-height: 15px;
    color: #e4e4e4;
}

.tray-notify {
    width: 46px;
    height: 40px;
    display: flex;
    align-items: center;
    justify-content: center;
    position: relative;
}

.notify-count {
    position: absolute;
    right: 6px;
    bottom: 4px;
    width: 14px;
    height: 14px;
    border: 1px solid #ccc;
    border-radius: 50%;
    background-color: #333;
    font-size: 10px;
    line-height: 12px;
    text-align: center;
}
```
